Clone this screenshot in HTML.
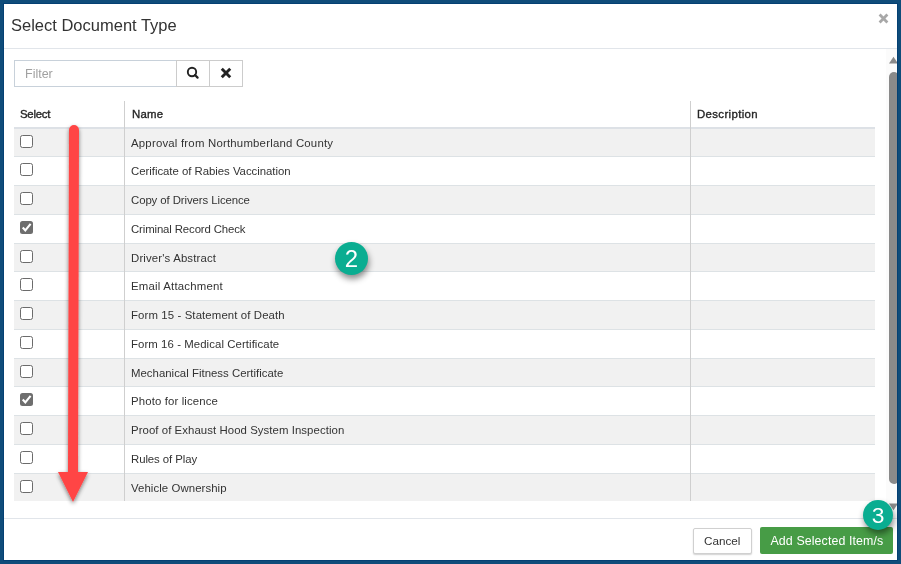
<!DOCTYPE html>
<html><head><meta charset="utf-8">
<style>
*{box-sizing:border-box}
html,body{margin:0;padding:0;width:901px;height:564px;overflow:hidden;background:#0f4c7a;font-family:"Liberation Sans",sans-serif;color:#333}
.abs{position:absolute}
#modal{position:absolute;left:4px;top:4px;width:893px;height:556px;background:#fff;overflow:hidden}
#frame-inner{position:absolute;left:3px;top:3px;width:895px;height:558px;border:1px solid #044073;pointer-events:none}
.title{position:absolute;left:11px;top:14px;font-size:16.5px;line-height:22px;color:#333;white-space:nowrap}
.hline{position:absolute;height:1px;background:#e1e5ea}
.input{position:absolute;left:14px;top:60px;width:163px;height:27px;border:1px solid #c8d1da;border-right:none}
.ph{position:absolute;left:25px;top:67px;font-size:12.5px;line-height:15px;color:#a0a0a0}
.btn{position:absolute;border:1px solid #ccc;background:#fff}
.th{position:absolute;top:107px;font-size:11.4px;font-weight:normal;-webkit-text-stroke:0.35px #262626;line-height:15px;color:#262626;white-space:nowrap}
.row{position:absolute;left:14px;width:861px;height:28.8px;border-bottom:1px solid #dfe3e8}
.row.g{background:#f0f0f0}
.vline{position:absolute;top:101px;width:1px;height:400px;background:#cfcfcf}
.cell{position:absolute;left:131px;font-size:11.4px;line-height:15px;color:#333;white-space:nowrap}
.rbg{left:14px;width:861px;background:#f1f1f1}
.rbd{left:14px;width:861px;height:1px;background:#dde2e5}
.cb{position:absolute;left:20px;width:13px;height:13px;border:1px solid #6b6b6b;border-radius:2.5px;background:#fff}
.cb.on{background:#6e6e6e;border-color:#6e6e6e}
.badge{position:absolute;border-radius:50%;background:#0aad91;color:#fff;text-align:center;box-shadow:1px 4px 6px rgba(0,0,0,.45)}
</style></head><body>
<div id="root" style="position:absolute;left:0;top:0;width:901px;height:564px;will-change:transform">
<div id="modal"></div>
<div id="frame-inner"></div>

<!-- header -->
<div class="title">Select Document Type</div>
<svg class="abs" style="left:878px;top:13px" width="11" height="11" viewBox="0 0 11 11"><path d="M2.6 2.6L8.4 8.4M8.4 2.6L2.6 8.4" stroke="#a8a8a8" stroke-width="2.8" stroke-linecap="square"/></svg>
<div class="hline" style="left:4px;top:48px;width:893px"></div>

<!-- scrollbar -->
<div class="abs" style="left:886px;top:49px;width:11px;height:469px;background:#fbfbfb;overflow:hidden">
<svg class="abs" style="left:0;top:6px" width="11" height="10"><path d="M3 8.5L7.5 1.8L12 8.5Z" fill="#8a8a8a"/></svg>
<div class="abs" style="left:3px;top:23px;width:10px;height:412px;background:#8a8a8a;border-radius:5px"></div>
<svg class="abs" style="left:0;top:453px" width="11" height="10"><path d="M3 1.5L7.5 8.2L12 1.5Z" fill="#8a8a8a"/></svg>
</div>
<!-- filter -->
<div class="input"></div>
<div class="ph">Filter</div>
<div class="btn" style="left:176px;top:60px;width:34px;height:27px"></div>
<div class="btn" style="left:209px;top:60px;width:34px;height:27px"></div>
<svg class="abs" style="left:185px;top:65px" width="16" height="16" viewBox="0 0 16 16"><circle cx="7" cy="7" r="4.2" fill="none" stroke="#222" stroke-width="1.9"/><path d="M10 10L12.6 12.6" stroke="#222" stroke-width="2.2" stroke-linecap="round"/></svg>
<svg class="abs" style="left:219px;top:66px" width="14" height="14" viewBox="0 0 14 14"><path d="M3.8 3.8L10.2 10.2M10.2 3.8L3.8 10.2" stroke="#222" stroke-width="2.9" stroke-linecap="square"/></svg>

<!-- table header -->
<div class="th" style="left:20px;letter-spacing:-0.26px">Select</div>
<div class="th" style="left:132px;letter-spacing:0.2px">Name</div>
<div class="th" style="left:697px;letter-spacing:0.36px">Description</div>
<div class="abs" style="left:14px;top:127px;width:861px;height:2px;background:#dde1e6"></div>

<div id="rows">
<div class="abs rbg" style="top:129px;height:27px"></div>
<div class="abs rbd" style="top:156px"></div>
<div class="cell" style="letter-spacing:0.206px;top:136px">Approval from Northumberland County</div>
<div class="cb" style="top:135px"></div>
<div class="abs rbd" style="top:185px"></div>
<div class="cell" style="letter-spacing:-0.032px;top:164px">Cerificate of Rabies Vaccination</div>
<div class="cb" style="top:163px"></div>
<div class="abs rbg" style="top:186px;height:28px"></div>
<div class="abs rbd" style="top:214px"></div>
<div class="cell" style="letter-spacing:-0.091px;top:193px">Copy of Drivers Licence</div>
<div class="cb" style="top:192px"></div>
<div class="abs rbd" style="top:243px"></div>
<div class="cell" style="letter-spacing:-0.13px;top:222px">Criminal Record Check</div>
<svg class="abs" style="left:20px;top:221px" width="13" height="13" viewBox="0 0 13 13"><rect x="0" y="0" width="13" height="13" rx="2.5" fill="#6e6e6e"/><path d="M2.7 6.6L5.3 9.3L10.6 2.8" fill="none" stroke="#fff" stroke-width="2.1"/></svg>
<div class="abs rbg" style="top:244px;height:27px"></div>
<div class="abs rbd" style="top:271px"></div>
<div class="cell" style="letter-spacing:0.15px;top:251px">Driver's Abstract</div>
<div class="cb" style="top:250px"></div>
<div class="abs rbd" style="top:300px"></div>
<div class="cell" style="letter-spacing:0.2px;top:279px">Email Attachment</div>
<div class="cb" style="top:278px"></div>
<div class="abs rbg" style="top:301px;height:28px"></div>
<div class="abs rbd" style="top:329px"></div>
<div class="cell" style="letter-spacing:0.111px;top:308px">Form 15 - Statement of Death</div>
<div class="cb" style="top:307px"></div>
<div class="abs rbd" style="top:358px"></div>
<div class="cell" style="letter-spacing:0.071px;top:337px">Form 16 - Medical Certificate</div>
<div class="cb" style="top:336px"></div>
<div class="abs rbg" style="top:359px;height:27px"></div>
<div class="abs rbd" style="top:386px"></div>
<div class="cell" style="letter-spacing:0.014px;top:366px">Mechanical Fitness Certificate</div>
<div class="cb" style="top:365px"></div>
<div class="abs rbd" style="top:415px"></div>
<div class="cell" style="letter-spacing:0.125px;top:394px">Photo for licence</div>
<svg class="abs" style="left:20px;top:393px" width="13" height="13" viewBox="0 0 13 13"><rect x="0" y="0" width="13" height="13" rx="2.5" fill="#6e6e6e"/><path d="M2.7 6.6L5.3 9.3L10.6 2.8" fill="none" stroke="#fff" stroke-width="2.1"/></svg>
<div class="abs rbg" style="top:416px;height:28px"></div>
<div class="abs rbd" style="top:444px"></div>
<div class="cell" style="letter-spacing:0.063px;top:423px">Proof of Exhaust Hood System Inspection</div>
<div class="cb" style="top:422px"></div>
<div class="abs rbd" style="top:473px"></div>
<div class="cell" style="letter-spacing:-0.083px;top:452px">Rules of Play</div>
<div class="cb" style="top:451px"></div>
<div class="abs rbg" style="top:474px;height:27px"></div>
<div class="cell" style="letter-spacing:0.075px;top:481px">Vehicle Ownership</div>
<div class="cb" style="top:480px"></div>
</div>

<div class="vline" style="left:124px"></div>
<div class="vline" style="left:690px"></div>

<!-- footer -->
<div class="hline" style="left:4px;top:518px;width:893px"></div>
<div class="btn" style="left:693px;top:528px;width:59px;height:26px;border-radius:2px;border-color:#d0d0d0;box-shadow:0 1px 1.5px rgba(0,0,0,.18)"></div>
<div class="abs" style="left:704px;top:533px;font-size:11.7px;line-height:15px;color:#333">Cancel</div>
<div class="abs" style="left:760px;top:527px;width:133px;height:27px;background:#479c46;border-radius:2px"></div>
<div class="abs" style="left:770.5px;top:534px;font-size:12.4px;letter-spacing:0.1px;line-height:15px;color:#fff;white-space:nowrap">Add Selected Item/s</div>

<!-- red arrow -->
<svg class="abs" style="left:0;top:0;overflow:visible" width="901" height="564">
<defs><filter id="sh" x="-50%" y="-10%" width="200%" height="130%"><feGaussianBlur in="SourceAlpha" stdDeviation="2.2"/><feOffset dx="0.2" dy="2"/><feComponentTransfer><feFuncA type="linear" slope="0.5"/></feComponentTransfer><feMerge><feMergeNode/><feMergeNode in="SourceGraphic"/></feMerge></filter></defs>
<g filter="url(#sh)">
<path d="M69 130 A5 5 0 0 1 79 130 L78 473 L68 473 Z" fill="#ff4545"/>
<path d="M58 472 L88 472 L73 502 Z" fill="#ff4545"/>
</g>
</svg>

<div class="badge" style="left:335px;top:242px;width:33px;height:33px;font-size:24px;line-height:33px">2</div>
<div class="badge" style="left:863px;top:500px;width:30px;height:30px;font-size:22.8px;line-height:31px">3</div>

</div>

</body></html>
